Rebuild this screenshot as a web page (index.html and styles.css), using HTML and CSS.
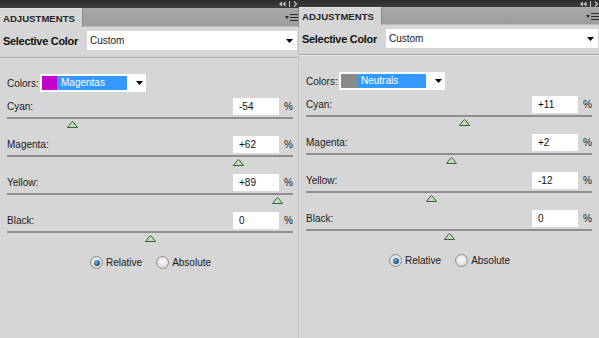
FILE: index.html
```html
<!DOCTYPE html>
<html>
<head>
<meta charset="utf-8">
<title>Adjustments - Selective Color</title>
<link rel="stylesheet" href="styles.css">
</head>
<body>
<div class="app">
  <section class="panel panel-a">
    <div class="topbar">
      <svg class="dock" width="19" height="8" viewBox="0 0 19 8"><polygon points="0,4 3,1.5 3,6.5"/><polygon points="3.5,4 6.5,1.5 6.5,6.5"/><rect x="10" y="1" width="1" height="6"/><polyline points="15,1.5 17.5,4 15,6.5" fill="none" stroke="#c4c4c4" stroke-width="1.2"/></svg>
    </div>
    <div class="tabrow">
      <div class="tab">ADJUSTMENTS</div>
      <div class="tabfill"><svg class="menu" width="13" height="7" viewBox="0 0 13 7"><polygon points="0,2 4,2 2,5"/><rect x="5" y="0" width="8" height="1"/><rect x="5" y="3" width="8" height="1"/><rect x="5" y="6" width="8" height="1"/></svg></div>
    </div>
    <div class="preset">
      <span class="title">Selective Color</span>
      <div class="select"><span>Custom</span><svg class="arrow" width="7" height="4" viewBox="0 0 7 4"><polygon points="0,0 7,0 3.5,4"/></svg></div>
    </div>
    <div class="sep"></div>
    <div class="colors">
      <span class="lbl">Colors:</span>
      <div class="cselect"><span class="swatch sw-magenta"></span><span class="cname">Magentas</span><svg class="arrow" width="7" height="4" viewBox="0 0 7 4"><polygon points="0,0 7,0 3.5,4"/></svg></div>
    </div>
    <div class="sliders">
      <div class="slider" style="--v:-54">
        <div class="srow"><span class="lbl">Cyan:</span><span class="val">-54</span><span class="pct">%</span></div>
        <div class="track"></div>
        <div class="thumbwrap"><svg class="thumb" width="11" height="7" viewBox="0 0 11 7"><path d="M0.5,6.5 L4.6,1.2 Q5.5,0.2 6.4,1.2 L10.5,6.5 Z"/></svg></div>
      </div>
      <div class="slider" style="--v:62">
        <div class="srow"><span class="lbl">Magenta:</span><span class="val">+62</span><span class="pct">%</span></div>
        <div class="track"></div>
        <div class="thumbwrap"><svg class="thumb" width="11" height="7" viewBox="0 0 11 7"><path d="M0.5,6.5 L4.6,1.2 Q5.5,0.2 6.4,1.2 L10.5,6.5 Z"/></svg></div>
      </div>
      <div class="slider" style="--v:89">
        <div class="srow"><span class="lbl">Yellow:</span><span class="val">+89</span><span class="pct">%</span></div>
        <div class="track"></div>
        <div class="thumbwrap"><svg class="thumb" width="11" height="7" viewBox="0 0 11 7"><path d="M0.5,6.5 L4.6,1.2 Q5.5,0.2 6.4,1.2 L10.5,6.5 Z"/></svg></div>
      </div>
      <div class="slider" style="--v:0">
        <div class="srow"><span class="lbl">Black:</span><span class="val">0</span><span class="pct">%</span></div>
        <div class="track"></div>
        <div class="thumbwrap"><svg class="thumb" width="11" height="7" viewBox="0 0 11 7"><path d="M0.5,6.5 L4.6,1.2 Q5.5,0.2 6.4,1.2 L10.5,6.5 Z"/></svg></div>
      </div>
    </div>
    <div class="radios">
      <span class="radio checked"></span><span class="rlabel">Relative</span>
      <span class="radio"></span><span class="rlabel">Absolute</span>
    </div>
  </section>
  <div class="divider"></div>
  <section class="panel panel-b">
    <div class="topbar">
      <svg class="dock" width="19" height="8" viewBox="0 0 19 8"><polygon points="0,4 3,1.5 3,6.5"/><polygon points="3.5,4 6.5,1.5 6.5,6.5"/><rect x="10" y="1" width="1" height="6"/><polyline points="15,1.5 17.5,4 15,6.5" fill="none" stroke="#c4c4c4" stroke-width="1.2"/></svg>
    </div>
    <div class="tabrow">
      <div class="tab">ADJUSTMENTS</div>
      <div class="tabfill"><svg class="menu" width="13" height="7" viewBox="0 0 13 7"><polygon points="0,2 4,2 2,5"/><rect x="5" y="0" width="8" height="1"/><rect x="5" y="3" width="8" height="1"/><rect x="5" y="6" width="8" height="1"/></svg></div>
    </div>
    <div class="preset">
      <span class="title">Selective Color</span>
      <div class="select"><span>Custom</span><svg class="arrow" width="7" height="4" viewBox="0 0 7 4"><polygon points="0,0 7,0 3.5,4"/></svg></div>
    </div>
    <div class="sep"></div>
    <div class="colors">
      <span class="lbl">Colors:</span>
      <div class="cselect"><span class="swatch sw-neutral"></span><span class="cname">Neutrals</span><svg class="arrow" width="7" height="4" viewBox="0 0 7 4"><polygon points="0,0 7,0 3.5,4"/></svg></div>
    </div>
    <div class="sliders">
      <div class="slider" style="--v:11">
        <div class="srow"><span class="lbl">Cyan:</span><span class="val">+11</span><span class="pct">%</span></div>
        <div class="track"></div>
        <div class="thumbwrap"><svg class="thumb" width="11" height="7" viewBox="0 0 11 7"><path d="M0.5,6.5 L4.6,1.2 Q5.5,0.2 6.4,1.2 L10.5,6.5 Z"/></svg></div>
      </div>
      <div class="slider" style="--v:2">
        <div class="srow"><span class="lbl">Magenta:</span><span class="val">+2</span><span class="pct">%</span></div>
        <div class="track"></div>
        <div class="thumbwrap"><svg class="thumb" width="11" height="7" viewBox="0 0 11 7"><path d="M0.5,6.5 L4.6,1.2 Q5.5,0.2 6.4,1.2 L10.5,6.5 Z"/></svg></div>
      </div>
      <div class="slider" style="--v:-12">
        <div class="srow"><span class="lbl">Yellow:</span><span class="val">-12</span><span class="pct">%</span></div>
        <div class="track"></div>
        <div class="thumbwrap"><svg class="thumb" width="11" height="7" viewBox="0 0 11 7"><path d="M0.5,6.5 L4.6,1.2 Q5.5,0.2 6.4,1.2 L10.5,6.5 Z"/></svg></div>
      </div>
      <div class="slider" style="--v:0">
        <div class="srow"><span class="lbl">Black:</span><span class="val">0</span><span class="pct">%</span></div>
        <div class="track"></div>
        <div class="thumbwrap"><svg class="thumb" width="11" height="7" viewBox="0 0 11 7"><path d="M0.5,6.5 L4.6,1.2 Q5.5,0.2 6.4,1.2 L10.5,6.5 Z"/></svg></div>
      </div>
    </div>
    <div class="radios">
      <span class="radio checked"></span><span class="rlabel">Relative</span>
      <span class="radio"></span><span class="rlabel">Absolute</span>
    </div>
  </section>
</div>
</body>
</html>
```
FILE: styles.css
```css
html, body {
  margin: 0;
  padding: 0;
  background: #d6d6d6;
}
body {
  font-family: "Liberation Sans", Arial, sans-serif;
  font-size: 10px;
  color: #1a1a1a;
}
.app {
  display: flex;
  width: 599px;
  height: 338px;
  overflow: hidden;
  background: #d6d6d6;
}
.panel {
  display: flex;
  flex-direction: column;
  background: #d6d6d6;
}
.panel-a { width: 298px; }
.panel-b { width: 300px; }
.divider {
  width: 1px;
  background: linear-gradient(#3a3a3a 0, #3a3a3a 8px, #8a8a8a 8px, #8a8a8a 27px, #c6c6c6 27px);
}

/* top dark bar */
.topbar {
  height: 8px;
  background: linear-gradient(#2b2b2b, #3d3d3d);
  display: flex;
  justify-content: flex-end;
  align-items: center;
}
.panel-b .topbar { height: 7px; }
.dock { display: block; fill: #c4c4c4; }

/* tab row */
.tabrow {
  height: 19px;
  display: flex;
}
.panel-b .tabrow { height: 18px; }
.tab {
  width: 79px;
  padding-left: 3px;
  background: #d6d6d6;
  border-top: 1px solid #e4e4e4;
  border-right: 1px solid #8a8a8a;
  font-weight: bold;
  font-size: 9.6px;
  color: #262626;
  display: flex;
  align-items: center;
}
.tabfill {
  flex: 1;
  background: linear-gradient(#a9a9a9, #9d9d9d);
  border-bottom: 1px solid #bcbcbc;
  display: flex;
  justify-content: flex-end;
  align-items: flex-start;
}
.menu {
  display: block;
  fill: #2a2a2a;
  margin-top: 6px;
}

/* preset row */
.preset {
  display: grid;
  grid-template-columns: 84px 1fr;
  align-items: center;
  padding-left: 3px;
  margin-right: 1px;
  margin-top: 4px;
}
.title {
  font-weight: bold;
  font-size: 11px;
  letter-spacing: -0.3px;
  color: #111;
}
.select {
  height: 19px;
  background: #fff;
  display: flex;
  align-items: center;
  justify-content: space-between;
  padding: 0 4px 0 3px;
}
.arrow { display: block; fill: #000; }

.sep {
  margin-top: 7px;
  height: 1px;
  background: #a3a3a3;
  border-bottom: 1px solid #e6e6e6;
}
.panel-b .sep { margin-top: 6px; }

/* colors row */
.colors {
  display: grid;
  grid-template-columns: 33px 106px;
  align-items: center;
  padding-left: 7px;
  margin-top: 15px;
}
.panel-b .colors { margin-top: 16px; }
.cselect {
  height: 18px;
  background: #fff;
  display: flex;
  align-items: center;
  padding-left: 2px;
}
.swatch {
  width: 15px;
  height: 14px;
}
.sw-magenta { background: #c400cc; }
.sw-neutral { background: #8a8a8a; width: 16px; }
.cname {
  width: 66px;
  height: 14px;
  line-height: 14px;
  padding-left: 4px;
  background: #3399ff;
  color: #fff;
}
.sw-neutral + .cname { width: 65px; }
.cselect .arrow { margin-left: 9px; }

/* sliders */
.sliders {
  padding-left: 7px;
  margin-top: 6px;
}
.slider {
  width: 286px;
  margin-bottom: 8px;
}
.srow {
  height: 17px;
  display: flex;
  align-items: center;
}
.srow .lbl { flex: 1; }
.val {
  width: 40px;
  height: 17px;
  line-height: 17px;
  padding-left: 6px;
  background: #fff;
  color: #111;
}
.pct {
  width: 9px;
  margin-left: 5px;
}
.track {
  margin-top: 2px;
  height: 2px;
  background: #8e8e8e;
}
.thumbwrap {
  padding-top: 2px;
  height: 7px;
}
.thumb {
  display: block;
  margin-left: calc(143px + var(--v) * 1.43px - 5.5px);
  fill: #bfdfb6;
  stroke: #336233;
  stroke-width: 1;
}

/* radios */
.radios {
  display: flex;
  align-items: center;
  padding-left: 90px;
  margin-top: 6px;
}
.radio {
  width: 11px;
  height: 11px;
  border: 1px solid #8d8d8d;
  border-radius: 50%;
  background: radial-gradient(circle at 50% 40%, #fbfbfb, #cfcfcf);
  position: relative;
}
.radio.checked {
  background: radial-gradient(circle at 50% 40%, #f4f4f4, #cdcdcd);
}
.radio.checked::after {
  content: "";
  position: absolute;
  left: 2.5px;
  top: 2.5px;
  width: 6px;
  height: 6px;
  border-radius: 50%;
  background: radial-gradient(circle at 40% 35%, #6cb4e4, #14507e 70%);
}
.rlabel {
  margin-left: 3px;
  margin-right: 14px;
}
```
